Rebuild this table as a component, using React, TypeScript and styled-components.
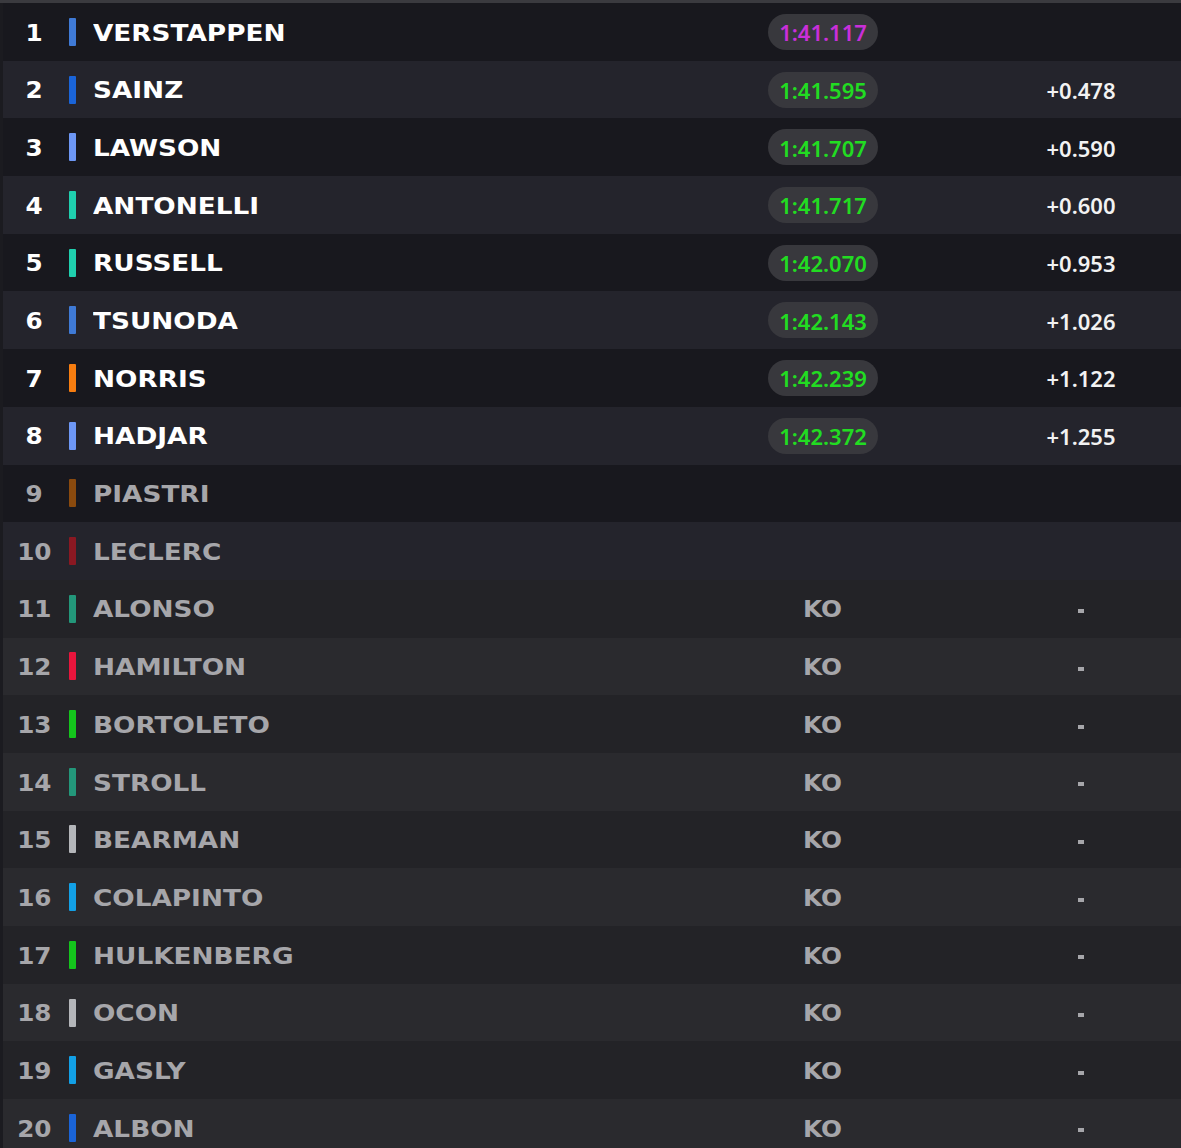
import React from "react";
import styled, { createGlobalStyle } from "styled-components";

const GlobalStyle = createGlobalStyle`
  html, body {
    margin: 0;
    padding: 0;
    background: #1b1b20;
  }
  #root {
    width: 1181px;
    height: 1148px;
    overflow: hidden;
  }
`;

type Driver = {
  pos: number;
  name: string;
  team: string;
  time?: string;
  gap?: string;
  fastest?: boolean;
  status: "in" | "dim" | "ko";
};

const drivers: Driver[] = [
  { pos: 1, name: "VERSTAPPEN", team: "#3f7ad6", time: "1:41.117", fastest: true, status: "in" },
  { pos: 2, name: "SAINZ", team: "#1a64d8", time: "1:41.595", gap: "+0.478", status: "in" },
  { pos: 3, name: "LAWSON", team: "#6d97f5", time: "1:41.707", gap: "+0.590", status: "in" },
  { pos: 4, name: "ANTONELLI", team: "#1fcfae", time: "1:41.717", gap: "+0.600", status: "in" },
  { pos: 5, name: "RUSSELL", team: "#1fcfae", time: "1:42.070", gap: "+0.953", status: "in" },
  { pos: 6, name: "TSUNODA", team: "#3f7ad6", time: "1:42.143", gap: "+1.026", status: "in" },
  { pos: 7, name: "NORRIS", team: "#f77d10", time: "1:42.239", gap: "+1.122", status: "in" },
  { pos: 8, name: "HADJAR", team: "#6d97f5", time: "1:42.372", gap: "+1.255", status: "in" },
  { pos: 9, name: "PIASTRI", team: "#8a4a0e", status: "dim" },
  { pos: 10, name: "LECLERC", team: "#8a1822", status: "dim" },
  { pos: 11, name: "ALONSO", team: "#23977a", status: "ko" },
  { pos: 12, name: "HAMILTON", team: "#e8153c", status: "ko" },
  { pos: 13, name: "BORTOLETO", team: "#14c41c", status: "ko" },
  { pos: 14, name: "STROLL", team: "#23977a", status: "ko" },
  { pos: 15, name: "BEARMAN", team: "#b4b6ba", status: "ko" },
  { pos: 16, name: "COLAPINTO", team: "#12a0e6", status: "ko" },
  { pos: 17, name: "HULKENBERG", team: "#14c41c", status: "ko" },
  { pos: 18, name: "OCON", team: "#b4b6ba", status: "ko" },
  { pos: 19, name: "GASLY", team: "#12a0e6", status: "ko" },
  { pos: 20, name: "ALBON", team: "#1a64d8", status: "ko" },
];

const Board = styled.div`
  border-top: 3px solid #3a3a3f;
  padding-left: 3px;
  background: #1b1b20;
  display: flex;
  flex-direction: column;
`;

const rowBg = (status: Driver["status"], odd: boolean) => {
  if (status === "ko") return odd ? "#232327" : "#2a2a2e";
  return odd ? "#18181e" : "#24242c";
};

const Row = styled.div<{ $bg: string }>`
  height: 57.7px;
  flex: 0 0 57.7px;
  display: flex;
  align-items: center;
  background: ${(p) => p.$bg};
  padding-right: 10px;
`;

const wide = `
  font-family: "DejaVu Sans", "Liberation Sans", sans-serif;
  font-weight: 700;
  font-size: 23.5px;
  line-height: 1;
  display: inline-block;
  white-space: nowrap;
  padding-top: 3px;
`;

const Pos = styled.div<{ $muted: boolean }>`
  width: 62px;
  display: flex;
  justify-content: center;
  color: ${(p) => (p.$muted ? "#a6a6aa" : "#ffffff")};
`;

const PosText = styled.span`
  ${wide}
  transform: scaleX(1.05);
  transform-origin: center;
`;

const TeamBar = styled.div<{ $color: string }>`
  width: 7px;
  height: 28px;
  margin-left: 4px;
  border-radius: 1px;
  background: ${(p) => p.$color};
`;

const NameCell = styled.div<{ $muted: boolean }>`
  flex: 1;
  margin-left: 17px;
  color: ${(p) => (p.$muted ? "#a6a6aa" : "#ffffff")};
`;

const NameText = styled.span`
  ${wide}
  transform: scaleX(1.12);
  transform-origin: left center;
`;

const TimeCell = styled.div`
  width: 180px;
  display: flex;
  justify-content: center;
`;

const Pill = styled.div<{ $fastest: boolean }>`
  width: 110px;
  height: 36px;
  border-radius: 18px;
  background: #38383d;
  display: flex;
  align-items: center;
  justify-content: center;
  padding-top: 1px;
  box-sizing: border-box;
  font-family: "Noto Sans", "Open Sans", sans-serif;
  font-weight: 600;
  font-size: 22px;
  color: ${(p) => (p.$fastest ? "#c92fd9" : "#22dc22")};
`;

const KO = styled.span`
  ${wide}
  color: #a6a6aa;
  transform: scaleX(1.05);
  transform-origin: center;
`;

const Spacer = styled.div`
  width: 78px;
`;

const GapCell = styled.div`
  width: 180px;
  display: flex;
  justify-content: center;
  padding-top: 1px;
  font-family: "Noto Sans", "Open Sans", sans-serif;
  font-weight: 600;
  font-size: 22px;
  color: #f2f2f2;
`;

const Dash = styled.span`
  display: inline-block;
  width: 6px;
  height: 4px;
  margin-top: 4px;
  background: #a6a6aa;
`;

export default function App() {
  return (
    <>
      <GlobalStyle />
      <Board>
        {drivers.map((d) => {
          const muted = d.status !== "in";
          return (
            <Row key={d.pos} $bg={rowBg(d.status, d.pos % 2 === 1)}>
              <Pos $muted={muted}>
                <PosText>{d.pos}</PosText>
              </Pos>
              <TeamBar $color={d.team} />
              <NameCell $muted={muted}>
                <NameText>{d.name}</NameText>
              </NameCell>
              <TimeCell>
                {d.time && <Pill $fastest={!!d.fastest}>{d.time}</Pill>}
                {d.status === "ko" && <KO>KO</KO>}
              </TimeCell>
              <Spacer />
              <GapCell>
                {d.gap}
                {d.status === "ko" && <Dash />}
              </GapCell>
            </Row>
          );
        })}
      </Board>
    </>
  );
}
